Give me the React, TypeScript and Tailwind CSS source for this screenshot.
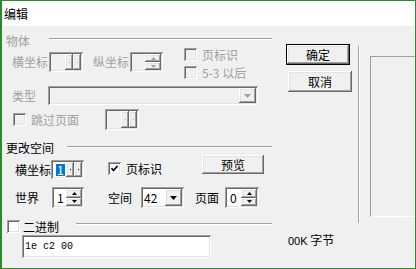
import React from 'react';

const sunken =
  'shadow-[inset_1px_1px_0_#a0a0a0,inset_-1px_-1px_0_#ffffff,inset_2px_2px_0_#696969,inset_-2px_-2px_0_#e3e3e3]';
const raised =
  'shadow-[inset_-1px_-1px_0_#696969,inset_1px_1px_0_#ffffff,inset_-2px_-2px_0_#a0a0a0,inset_2px_2px_0_#e3e3e3]';

const Tri = ({ dir, color, w = 5, h = 3 }: { dir: 'up' | 'down'; color: string; w?: number; h?: number }) => (
  <svg width={w} height={h} viewBox={`0 0 ${w} ${h}`} className="block">
    <polygon points={dir === 'up' ? `0,${h} ${w / 2},0 ${w},${h}` : `0,0 ${w},0 ${w / 2},${h}`} fill={color} />
  </svg>
);

const Etch = ({ className = '' }: { className?: string }) => (
  <div className={`flex-1 h-[2px] bg-white border-t border-[#a0a0a0] ${className}`} />
);

function Spin({
  size,
  value,
  disabled,
  split,
  selected,
  pad = 'pl-[3px]',
}: {
  size: string;
  value?: string;
  disabled?: boolean;
  split?: boolean;
  selected?: boolean;
  pad?: string;
}) {
  const arrow = disabled ? '#a0a0a0' : '#000000';
  return (
    <div className={`${size} flex p-[2px] ${sunken} ${disabled ? 'bg-[#f0f0f0]' : 'bg-white'}`}>
      <div className={`flex-1 flex items-center ${pad}`}>
        {value && (
          <span className={selected ? 'bg-[#0078d7] text-white px-[1px]' : ''}>{value}</span>
        )}
      </div>
      {split ? (
        <div className="w-[16px] flex">
          <div className={`flex-1 bg-[#f0f0f0] ${raised} flex items-center justify-center`}>
            <div className="w-[1px] h-[1px]" style={{ background: arrow }} />
          </div>
          <div className={`flex-1 bg-[#f0f0f0] ${raised} flex items-center justify-center`}>
            <div className="w-[1px] h-[1px]" style={{ background: arrow }} />
          </div>
        </div>
      ) : (
        <div className="w-[16px] flex flex-col">
          <div className={`flex-1 bg-[#f0f0f0] ${raised} flex items-center justify-center`}>
            <Tri dir="up" color={arrow} />
          </div>
          <div className={`flex-1 bg-[#f0f0f0] ${raised} flex items-center justify-center`}>
            <Tri dir="down" color={arrow} />
          </div>
        </div>
      )}
    </div>
  );
}

function Combo({ size, value, disabled }: { size: string; value?: string; disabled?: boolean }) {
  return (
    <div className={`${size} flex p-[2px] ${sunken} ${disabled ? 'bg-[#f0f0f0]' : 'bg-white'}`}>
      <div className="flex-1 flex items-center pl-[1px]">{value}</div>
      <div className={`w-[17px] bg-[#f0f0f0] ${raised} flex items-center justify-center`}>
        <Tri dir="down" color={disabled ? '#a0a0a0' : '#000000'} w={7} h={4} />
      </div>
    </div>
  );
}

function Check({ checked, disabled }: { checked?: boolean; disabled?: boolean }) {
  return (
    <div
      className={`w-[13px] h-[13px] shrink-0 ${sunken} ${disabled ? 'bg-[#f0f0f0]' : 'bg-white'} flex items-center justify-center`}
    >
      {checked && (
        <svg width="7" height="7" viewBox="0 0 7 7" className="block">
          <polyline points="0.5,3 2.5,5.5 6.5,0.8" fill="none" stroke="#000" strokeWidth="1.6" />
        </svg>
      )}
    </div>
  );
}

export default function App() {
  const gray = 'text-[#a0a0a0]';
  return (
    <div className="w-[416px] h-[269px] flex flex-col border-t border-r border-b border-l-2 border-[#2b8a2b] bg-[#f0f0f0] text-[12px] leading-[12px] text-black font-['Noto_Sans_CJK_SC','Noto_Sans',sans-serif] overflow-hidden">
      <div className="h-[25px] bg-white flex items-center pl-[2px] shrink-0">编辑</div>

      <div className="flex-1 flex">
        {/* left column */}
        <div className="w-[266px] ml-[4px] flex flex-col">
          <div className="mt-[9px] h-[12px] flex items-start">
            <span className={gray}>物体</span>
            <Etch className="ml-[19px] mt-[3px]" />
          </div>

          <div className="mt-[1px] h-[30px] flex items-start">
            <div className="mt-[4px] h-[20px] flex items-center">
              <span className={`ml-[6px] ${gray}`}>横坐标</span>
              <div className="ml-[1px]">
                <Spin size="w-[34px] h-[20px]" disabled split />
              </div>
              <span className={`ml-[10px] ${gray}`}>纵坐标</span>
              <div className="ml-[1px]">
                <Spin size="w-[33px] h-[20px]" disabled />
              </div>
            </div>
            <div className="ml-[21px] flex flex-col">
              <div className="h-[13px] flex items-center">
                <Check disabled />
                <span className={`ml-[5px] ${gray}`}>页标识</span>
              </div>
              <div className="mt-[5px] h-[13px] flex items-center">
                <Check disabled />
                <span className={`ml-[5px] ${gray} whitespace-nowrap`}>5-3 以后</span>
              </div>
            </div>
          </div>

          <div className="mt-[8px] h-[19px] flex items-center">
            <span className={`ml-[6px] ${gray}`}>类型</span>
            <div className="ml-[12px]">
              <Combo size="w-[210px] h-[19px]" disabled />
            </div>
          </div>

          <div className="mt-[4px] h-[21px] flex items-center">
            <div className="ml-[7px]">
              <Check disabled />
            </div>
            <span className={`ml-[5px] ${gray}`}>跳过页面</span>
            <div className="ml-[26px]">
              <Spin size="w-[34px] h-[21px]" disabled split />
            </div>
          </div>

          <div className="mt-[12px] h-[12px] flex items-start">
            <span>更改空间</span>
            <Etch className="ml-[13px] mt-[4px]" />
          </div>

          <div className="mt-[1px] h-[24px] flex items-start">
            <div className="mt-[5px] h-[19px] flex items-center">
              <span className="ml-[9px]">横坐标</span>
              <Spin size="w-[33px] h-[19px]" value="1" split selected pad="pl-[3px]" />
            </div>
            <div className="mt-[7px] ml-[24px] h-[13px] flex items-center">
              <Check checked />
              <span className="ml-[5px]">页标识</span>
            </div>
            <button
              className={`ml-[40px] w-[62px] h-[19px] bg-[#f0f0f0] ${raised} flex items-center justify-center`}
            >
              预览
            </button>
          </div>

          <div className="mt-[8px] h-[21px] flex items-center">
            <span className="ml-[9px]">世界</span>
            <div className="ml-[13px]">
              <Spin size="w-[32px] h-[21px]" value="1" />
            </div>
            <span className="ml-[24px]">空间</span>
            <div className="ml-[9px]">
              <Combo size="w-[43px] h-[21px]" value="42" />
            </div>
            <span className="ml-[11px]">页面</span>
            <div className="ml-[6px]">
              <Spin size="w-[34px] h-[21px]" value="0" />
            </div>
          </div>

          <div className="mt-[12px] h-[13px] flex items-start">
            <div className="ml-[1px]">
              <Check />
            </div>
            <span className="ml-[3px] mt-[1px]">二进制</span>
            <Etch className="ml-[17px] mt-[3px]" />
          </div>

          <div className="mt-[2px] h-[23px] flex">
            <div className={`ml-[16px] w-[189px] h-[23px] bg-white ${sunken} flex items-center pl-[3px]`}>
              <span className="font-['Liberation_Mono',monospace] text-[10px]">1e c2 00</span>
            </div>
          </div>
        </div>

        {/* buttons column */}
        <div className="ml-[14px] w-[67px] flex flex-col">
          <button className="mt-[18px] w-[64px] h-[21px] border border-black bg-[#f0f0f0]">
            <div className={`w-full h-full ${raised} flex items-center justify-center`}>确定</div>
          </button>
          <button
            className={`mt-[6px] ml-[2px] w-[64px] h-[21px] bg-[#f0f0f0] ${raised} flex items-center justify-center`}
          >
            取消
          </button>
          <div className="mt-[142px] ml-[2px] whitespace-nowrap">
            <span className="font-['Liberation_Sans',sans-serif] text-[11px]">00K</span> 字节
          </div>
        </div>

        <div className="ml-[5px] mt-[20px] w-[2px] h-[177px] border-l border-[#a0a0a0] bg-white" />
        <div className="ml-[10px] mt-[30px] h-[161px] flex-1 border-t border-l border-b border-t-[#a0a0a0] border-l-[#a0a0a0] border-b-white" />
      </div>
    </div>
  );
}
